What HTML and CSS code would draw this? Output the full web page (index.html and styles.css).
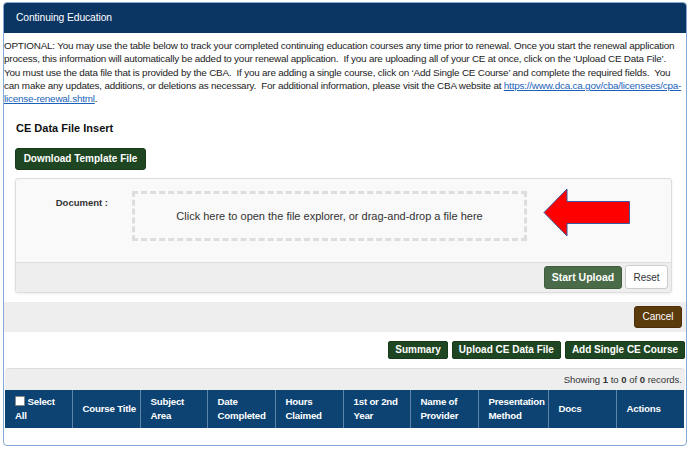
FILE: index.html
```html
<!DOCTYPE html>
<html lang="en">
<head>
<meta charset="utf-8">
<title>Continuing Education</title>
<link rel="stylesheet" href="styles.css">
</head>
<body>
<div class="panel">
  <div class="panel-heading">Continuing Education</div>
  <div class="panel-body">
    <p class="intro">OPTIONAL: You may use the table below to track your completed continuing education courses any time prior to renewal. Once you start the renewal application<br>process, this information will automatically be added to your renewal application.&nbsp; If you are uploading all of your CE at once, click on the ‘Upload CE Data File’.<br>You must use the data file that is provided by the CBA.&nbsp; If you are adding a single course, click on ‘Add Single CE Course’ and complete the required fields.&nbsp; You<br>can make any updates, additions, or deletions as necessary.&nbsp; For additional information, please visit the CBA website at <a href="#">https://www.dca.ca.gov/cba/licensees/cpa-<br>license-renewal.shtml</a>.</p>

    <h4 class="section-title">CE Data File Insert</h4>
    <button class="btn btn-dark btn-download">Download Template File</button>

    <div class="upload">
      <div class="upload-body">
        <label class="doc-label">Document :</label>
        <div class="dropzone">Click here to open the file explorer, or drag-and-drop a file here</div>
        <svg class="arrow" width="88" height="50" viewBox="0 0 88 50">
          <polygon points="1,24.5 24,1 24,13.5 86.5,13.5 86.5,35.5 24,35.5 24,48" fill="#ff0000" stroke="#3a5aa0" stroke-width="1"/>
        </svg>
      </div>
      <div class="upload-footer">
        <button class="btn btn-start">Start Upload</button>
        <button class="btn btn-reset">Reset</button>
      </div>
    </div>

    <div class="cancel-bar">
      <button class="btn btn-cancel">Cancel</button>
    </div>

    <div class="actions">
      <button class="btn btn-dark btn-sm">Summary</button>
      <button class="btn btn-dark btn-sm">Upload CE Data File</button>
      <button class="btn btn-dark btn-sm">Add Single CE Course</button>
    </div>

    <div class="grid">
      <div class="grid-info">Showing <b>1</b> to <b>0</b> of <b>0</b> records.</div>
      <table class="grid-table">
        <thead>
          <tr>
            <th class="c1"><span class="check"></span> Select All</th>
            <th class="c2">Course Title</th>
            <th class="c3">Subject Area</th>
            <th class="c4">Date Completed</th>
            <th class="c5">Hours Claimed</th>
            <th class="c6">1st or 2nd Year</th>
            <th class="c7">Name of Provider</th>
            <th class="c8">Presentation Method</th>
            <th class="c9">Docs</th>
            <th class="c10">Actions</th>
          </tr>
        </thead>
      </table>
    </div>
  </div>
</div>
</body>
</html>
```

FILE: styles.css
```css
* { box-sizing: border-box; }

body {
  margin: 0;
  background: #ffffff;
  color: #222222;
  font-family: "Liberation Sans", Arial, sans-serif;
}

.panel {
  margin: 2px 0 0 3px;
  width: 684px;
  border: 1px solid #84a9d4;
  border-radius: 4px;
}

.panel-heading {
  height: 30px;
  line-height: 30px;
  padding-left: 12px;
  background: #0b3563;
  color: #ffffff;
  font-size: 10.3px;
  letter-spacing: -0.1px;
  border-radius: 3px 3px 0 0;
}

.panel-body {
  padding-bottom: 17px;
}

.intro {
  margin: 6px 0 0 0;
  font-size: 9.9px;
  letter-spacing: -0.2px;
  line-height: 13.33px;
  color: #222222;
  white-space: nowrap;
}

.intro a {
  color: #1a62b8;
  text-decoration: underline;
}

.section-title {
  margin: 15px 0 0 12px;
  font-size: 11px;
  line-height: 14px;
  font-weight: bold;
  color: #111111;
}

.btn {
  font-family: inherit;
  cursor: pointer;
  border-radius: 3px;
  font-size: 10px;
  color: #ffffff;
  border: 1px solid transparent;
  padding: 0 8px;
}

.btn-dark {
  background: #1e4622;
  border-color: #173a1b;
  font-weight: bold;
}

.btn-download {
  display: block;
  margin: 13px 0 0 11px;
  height: 22px;
  width: 131px;
  padding: 0;
}

.upload {
  margin: 8px 0 0 11px;
  width: 657px;
  border: 1px solid #dddddd;
  border-radius: 3px;
  background: #f9f9f9;
  box-shadow: 0 1px 3px rgba(0, 0, 0, 0.08);
}

.upload-body {
  display: flex;
  align-items: flex-start;
  height: 83px;
  padding-top: 12px;
}

.doc-label {
  width: 92px;
  padding-top: 6px;
  text-align: right;
  font-size: 9.5px;
  font-weight: bold;
  color: #333333;
}

.dropzone {
  margin-left: 24px;
  width: 395px;
  height: 50px;
  border: 3px dashed #dddddd;
  display: flex;
  align-items: center;
  justify-content: center;
  font-size: 11px;
  color: #333333;
}

.arrow {
  display: block;
  margin: -3px 0 0 16px;
}

.upload-footer {
  height: 30px;
  background: #eeeeee;
  border-top: 1px solid #dddddd;
  display: flex;
  justify-content: flex-end;
  align-items: center;
  gap: 3px;
  padding-right: 3px;
  border-radius: 0 0 3px 3px;
}

.btn-start {
  height: 23px;
  width: 78px;
  padding: 0;
  background: #4a6b48;
  border-color: #3f5d3d;
  font-weight: bold;
  font-size: 10.5px;
}

.btn-reset {
  height: 24px;
  width: 43px;
  padding: 0;
  background: #ffffff;
  border-color: #cccccc;
  color: #333333;
}

.cancel-bar {
  margin-top: 9px;
  height: 30px;
  background: #eeeeee;
  display: flex;
  justify-content: flex-end;
  align-items: center;
  padding-right: 4px;
}

.btn-cancel {
  height: 22px;
  width: 48px;
  padding: 0;
  background: #5b3a0c;
  border-color: #4a2f09;
}

.actions {
  margin-top: 9px;
  display: flex;
  justify-content: flex-end;
  gap: 4px;
  padding-right: 1px;
}

.btn-sm {
  height: 18px;
  padding: 0 6px;
  border-radius: 2px;
}

.grid {
  margin: 9px 1px 0 1px;
}

.grid-info {
  height: 22px;
  line-height: 21px;
  background: #eeeeee;
  border-top: 1px solid #dddddd;
  border-radius: 4px 4px 0 0;
  text-align: right;
  padding-right: 3px;
  font-size: 9.5px;
  color: #333333;
}

.grid-table {
  width: 679px;
  border-collapse: collapse;
  table-layout: fixed;
}

.grid-table th {
  height: 38px;
  background: #0c4372;
  color: #ffffff;
  font-size: 9.7px;
  letter-spacing: -0.2px;
  line-height: 13.33px;
  font-weight: bold;
  text-align: left;
  vertical-align: middle;
  padding: 0 3px 0 10px;
  border-right: 1px solid #5f86aa;
}

.grid-table th.c1 {
  padding-right: 14px;
}

.grid-table th:last-child {
  border-right: none;
}

.c1 { width: 67px; }
.c2 { width: 68px; }
.c3 { width: 67px; }
.c4 { width: 68px; }
.c5 { width: 68px; }
.c6 { width: 67px; }
.c7 { width: 68px; }
.c8 { width: 70px; }
.c9 { width: 68px; }
.c10 { width: 68px; }

.check {
  display: inline-block;
  width: 10px;
  height: 10px;
  background: #ffffff;
  border: 1px solid #8a8a8a;
  border-radius: 1px;
  vertical-align: -1px;
}
```
